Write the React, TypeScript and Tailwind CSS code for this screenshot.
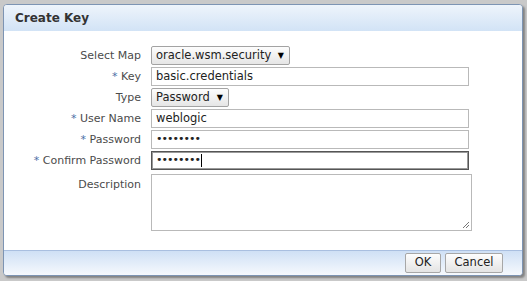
import React from 'react';

const font = { fontFamily: '"DejaVu Sans", Verdana, sans-serif' };

function Row({ label, required, children }: { label: string; required?: boolean; children: React.ReactNode }) {
  return (
    <div className="flex items-center">
      <div className="w-[147px] shrink-0 text-right pr-[10px] text-[11px] text-[#4b4b4b] leading-none">
        {required && <span className="text-[#4a6fa5]">* </span>}
        {label}
      </div>
      {children}
    </div>
  );
}

function Select({ value, width }: { value: string; width: string }) {
  return (
    <div
      className={`${width} h-[19px] flex items-center justify-between pl-[4px] pr-[5px] border border-[#a3a3a3] rounded-[2px] bg-gradient-to-b from-[#fdfdfd] to-[#e6e6e6] text-[11.5px] text-[#222]`}
    >
      <span>{value}</span>
      <span className="text-[8px] text-black">▼</span>
    </div>
  );
}

function TextInput({ value, focus, mono }: { value: string; focus?: boolean; mono?: boolean }) {
  return (
    <div
      className={`w-[318px] h-[19px] flex items-center px-[4px] bg-white text-[11.5px] text-[#222] ${
        focus ? 'border border-[#555] shadow-[inset_0_0_0_1px_#9a9a9a]' : 'border border-[#b9b9b9]'
      }`}
    >
      <span className={mono ? 'tracking-[-1px] text-[11px]' : ''}>{value}</span>
      {focus && <span className="w-px h-[13px] bg-black ml-[1px]" />}
    </div>
  );
}

export default function App() {
  return (
    <div className="w-[527px] h-[281px] bg-[#c9c9c9] pt-[4px] pl-[3px]" style={font}>
      <div className="w-[520px] h-[272px] flex flex-col border border-[#7d94b3] rounded-[4px] bg-white overflow-hidden shadow-[2px_2px_2px_rgba(0,0,0,0.35)]">
        {/* Header */}
        <div className="h-[26px] shrink-0 flex items-center pl-[11px] bg-gradient-to-b from-[#eef4fb] to-[#d2e3f6]">
          <span className="text-[12px] font-bold text-[#333]">Create Key</span>
        </div>

        {/* Body */}
        <div className="flex-1 flex flex-col gap-[2px] pt-[15px]">
          <Row label="Select Map">
            <Select value="oracle.wsm.security" width="w-[139px]" />
          </Row>
          <Row label="Key" required>
            <TextInput value="basic.credentials" />
          </Row>
          <Row label="Type">
            <Select value="Password" width="w-[78px]" />
          </Row>
          <Row label="User Name" required>
            <TextInput value="weblogic" />
          </Row>
          <Row label="Password" required>
            <TextInput value="••••••••" mono />
          </Row>
          <Row label="Confirm Password" required>
            <TextInput value="••••••••" mono focus />
          </Row>
          <div className="flex items-start mt-[2px]">
            <div className="w-[147px] shrink-0 text-right pr-[10px] text-[11px] text-[#4b4b4b] pt-[3px]">
              Description
            </div>
            <div className="relative w-[321px] h-[57px] border border-[#b9b9b9] bg-white">
              <svg className="absolute right-[1px] bottom-[1px]" width="8" height="8" viewBox="0 0 8 8">
                <path d="M7 1 L1 7 M7 4 L4 7" stroke="#777" strokeWidth="1" />
              </svg>
            </div>
          </div>
        </div>

        {/* Footer */}
        <div className="h-[25px] shrink-0 flex items-center justify-end gap-[4px] pr-[19px] border-t border-[#a9bfe0] bg-gradient-to-b from-[#cfe0f5] to-[#f6f9fd]">
          <button className="h-[20px] w-[36px] border border-[#a7a7a7] rounded-[2px] bg-gradient-to-b from-[#fdfdfd] to-[#e4e4e4] text-[11.5px] text-[#222]">
            OK
          </button>
          <button className="h-[20px] w-[58px] border border-[#a7a7a7] rounded-[2px] bg-gradient-to-b from-[#fdfdfd] to-[#e4e4e4] text-[11.5px] text-[#222]">
            Cancel
          </button>
        </div>
      </div>
    </div>
  );
}
